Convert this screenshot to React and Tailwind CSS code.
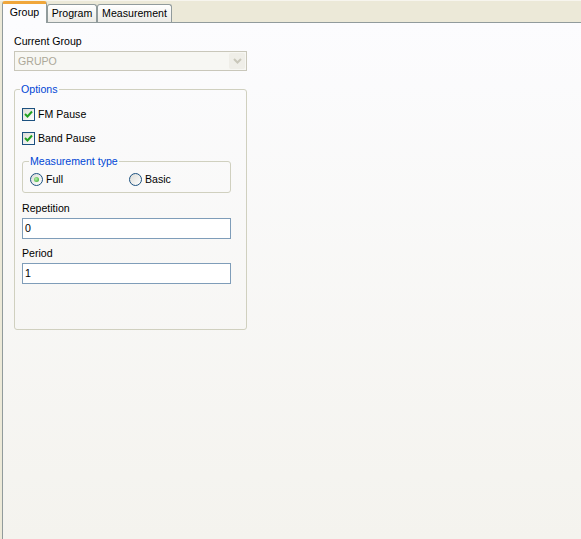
import React from "react";

const font = { fontFamily: '"Liberation Sans", Arial, sans-serif' };

function Check() {
  return (
    <span className="flex h-[13px] w-[13px] items-center justify-center border border-[#1c5180] bg-gradient-to-br from-[#dcdcd7] to-white">
      <svg width="9" height="9" viewBox="0 0 9 9">
        <path d="M1 4 L3.5 6.5 L8 1.5" fill="none" stroke="#21a121" strokeWidth="2" />
      </svg>
    </span>
  );
}

function Radio({ on }) {
  return (
    <span className="flex h-[13px] w-[13px] items-center justify-center rounded-full border border-[#1c5180] bg-gradient-to-br from-[#dcdcd7] to-white">
      {on && <span className="h-[5px] w-[5px] rounded-full bg-[radial-gradient(circle_at_40%_40%,#b8f0a8,#21a121)]" />}
    </span>
  );
}

function Tab({ label, active, w }) {
  if (active) {
    return (
      <div
        className={`relative z-10 -mb-px flex h-[22px] ${w} items-start justify-center rounded-t-[3px] border-x border-t-[3px] border-x-[#919b9c] border-t-[#f0a63a] bg-[#fcfcfe] pt-[2px]`}
      >
        {label}
      </div>
    );
  }
  return (
    <div
      className={`flex h-[18px] ${w} items-start justify-center rounded-t-[3px] border-x border-t border-[#919b9c] bg-gradient-to-b from-white to-[#ecebe6] pt-[2px]`}
    >
      {label}
    </div>
  );
}

export default function App() {
  return (
    <div
      className="flex h-[539px] w-[581px] flex-col overflow-hidden bg-[#ece9d8] text-[10.6px] leading-[13px] text-black"
      style={font}
    >
      <div className="flex h-[22px] items-end border-t border-t-[#f7f5ee] pl-[2px]">
        <Tab label="Group" active w="w-[45px]" />
        <Tab label="Program" w="w-[50px]" />
        <Tab label="Measurement" w="w-[75px]" />
      </div>
      <div className="ml-[2px] flex-1 border-l border-t border-[#919b9c] bg-gradient-to-b from-[#fcfcfe] to-[#f4f3ee] pl-[11px] pt-[12px]">
        <div>Current Group</div>
        <div className="mt-[3px] flex h-[20px] w-[233px] items-center border border-[#c9c7ba] bg-[#f7f7f3] pl-[3px] text-[#aca899]">
          <span className="flex-1">GRUPO</span>
          <span className="mr-[1px] flex h-[16px] w-[16px] items-center justify-center rounded-[2px] bg-[#efeee8]">
            <svg width="9" height="6" viewBox="0 0 9 6">
              <path d="M1 1 L4.5 4.5 L8 1" fill="none" stroke="#c9c7ba" strokeWidth="2" />
            </svg>
          </span>
        </div>

        <fieldset className="mt-[12px] w-[233px] rounded-[3px] border border-[#d0d0bf] pb-[45px] pl-[7px]">
          <legend className="-ml-[2px] px-[1px] text-[#0046d5]">Options</legend>
          <div className="mt-[12px] flex items-center gap-[3px]">
            <Check />
            <span>FM Pause</span>
          </div>
          <div className="mt-[11px] flex items-center gap-[3px]">
            <Check />
            <span>Band Pause</span>
          </div>

          <fieldset className="mt-[10px] w-[209px] rounded-[3px] border border-[#d0d0bf] pb-[6px] pl-[7px]">
            <legend className="-ml-[1px] px-[1px] text-[#0046d5]">Measurement type</legend>
            <div className="mt-[5px] flex items-center">
              <div className="flex w-[99px] items-center gap-[3px]">
                <Radio on />
                <span>Full</span>
              </div>
              <div className="flex items-center gap-[3px]">
                <Radio />
                <span>Basic</span>
              </div>
            </div>
          </fieldset>

          <div className="mt-[9px]">Repetition</div>
          <div className="mt-[3px] flex h-[21px] w-[209px] items-center border border-[#7f9db9] bg-white pl-[2px]">0</div>
          <div className="mt-[8px]">Period</div>
          <div className="mt-[3px] flex h-[21px] w-[209px] items-center border border-[#7f9db9] bg-white pl-[2px]">1</div>
        </fieldset>
      </div>
    </div>
  );
}
